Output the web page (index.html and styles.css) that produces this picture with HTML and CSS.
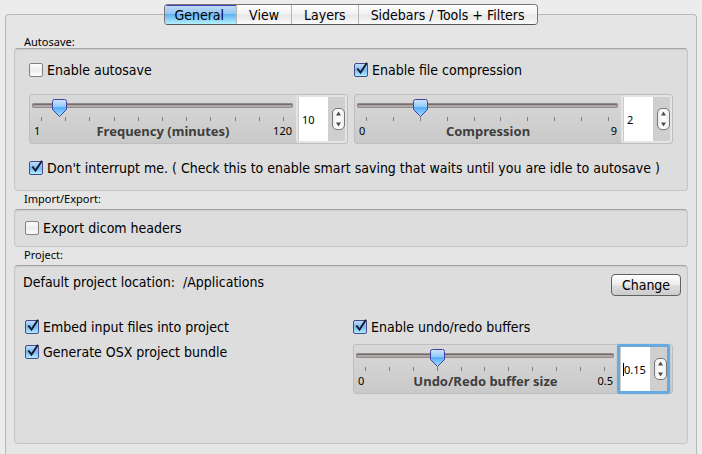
FILE: index.html
```html
<!DOCTYPE html>
<html lang="en">
<head>
<meta charset="utf-8">
<title>Preferences</title>
<link rel="stylesheet" href="styles.css">
</head>
<body>
<main class="window">
  <nav class="tabs">
    <button class="tab active" type="button">General</button>
    <button class="tab" type="button">View</button>
    <button class="tab" type="button">Layers</button>
    <button class="tab" type="button">Sidebars / Tools + Filters</button>
  </nav>
  <div class="panel">
    <section>
      <h2>Autosave:</h2>
      <div class="group autosave">
        <label class="check"><input type="checkbox">Enable autosave</label>
        <label class="check"><input type="checkbox" checked>Enable file compression</label>
        <div class="adjuster">
          <div class="scale">
            <input class="range" id="freq" type="range" min="1" max="120" value="10">
            <div class="ticks"><i></i><i></i><i></i><i></i><i></i><i></i><i></i><i></i><i></i><i></i><i></i></div>
            <div class="legend"><span>1</span><label for="freq">Frequency (minutes)</label><span>120</span></div>
          </div>
          <div class="spin">
            <input type="text" value="10" aria-label="Frequency value">
            <button type="button" aria-label="Step frequency"><svg viewBox="0 0 13 22"><path d="M4 7.500L6.500 3.500L9 7.500ZM4 14.500L6.500 18.500L9 14.500Z"/></svg></button>
          </div>
        </div>
        <div class="adjuster">
          <div class="scale">
            <input class="range" id="comp" type="range" min="0" max="9" value="2">
            <div class="ticks"><i></i><i></i><i></i><i></i><i></i><i></i><i></i><i></i><i></i><i></i></div>
            <div class="legend"><span>0</span><label for="comp">Compression</label><span>9</span></div>
          </div>
          <div class="spin">
            <input type="text" value="2" aria-label="Compression value">
            <button type="button" aria-label="Step compression"><svg viewBox="0 0 13 22"><path d="M4 7.500L6.500 3.500L9 7.500ZM4 14.500L6.500 18.500L9 14.500Z"/></svg></button>
          </div>
        </div>
        <label class="check wide"><input type="checkbox" checked>Don't interrupt me. ( Check this to enable smart saving that waits until you are idle to autosave )</label>
      </div>
    </section>
    <section>
      <h2>Import/Export:</h2>
      <div class="group export">
        <label class="check"><input type="checkbox">Export dicom headers</label>
      </div>
    </section>
    <section>
      <h2>Project:</h2>
      <div class="group project">
        <div class="location">
          <p>Default project location: &nbsp;/Applications</p>
          <button class="push" type="button">Change</button>
        </div>
        <div class="options">
          <div class="stack">
            <label class="check"><input type="checkbox" checked>Embed input files into project</label>
            <label class="check"><input type="checkbox" checked>Generate OSX project bundle</label>
          </div>
          <div class="stack">
            <label class="check"><input type="checkbox" checked>Enable undo/redo buffers</label>
            <div class="adjuster">
              <div class="scale">
                <input class="range" id="undo" type="range" min="0" max="0.5" step="0.01" value="0.15">
                <div class="ticks"><i></i><i></i><i></i><i></i><i></i><i></i><i></i><i></i><i></i><i></i><i></i></div>
                <div class="legend"><span>0</span><label for="undo">Undo/Redo buffer size</label><span>0.5</span></div>
              </div>
              <div class="spin focused">
                <input type="text" value="0.15" aria-label="Buffer size value">
                <button type="button" aria-label="Step buffer size"><svg viewBox="0 0 13 22"><path d="M4 7.500L6.500 3.500L9 7.500ZM4 14.500L6.500 18.500L9 14.500Z"/></svg></button>
              </div>
            </div>
          </div>
        </div>
      </div>
    </section>
  </div>
</main>
</body>
</html>
```
FILE: styles.css
```css
* { box-sizing: border-box; }
html { height: 100%; }
body {
  height: 100%;
  margin: 0;
  overflow: hidden;
  background: #ececec;
  color: #000;
  font: 14px/16px "DejaVu Sans Condensed", "DejaVu Sans", sans-serif;
}
button, input { font: inherit; color: inherit; margin: 0; }
h2, p { margin: 0; font-weight: 400; }
.window {
  display: flex;
  flex-direction: column;
  min-height: 100%;
  padding: 4px 5px 0 5px;
}
.tabs {
  position: relative;
  display: flex;
  align-self: center;
  height: 21px;
  margin-bottom: -11px;
  border: 1px solid #777;
  border-bottom-color: #555;
  border-radius: 4px;
  overflow: hidden;
}
.tab {
  padding: 0 12px;
  border: 0;
  border-left: 1px solid #b4b4b4;
  background: linear-gradient(#fff, #f1f1f1 48%, #e6e6e6 52%, #fafafa);
  line-height: 18px;
}
.tab.active {
  padding: 0 12px 0 9px;
  border-left: 0;
  background: linear-gradient(#c3dcf6, #95c7f3 46%, #62b2f1 50%, #b5f1fd);
  box-shadow: inset 0 1px #4640b0;
}
.panel {
  flex: 1;
  padding: 19px 8px 11px;
  border: 1px solid #b8b8b8;
  border-bottom: 0;
  border-radius: 4px 4px 0 0;
  background: #e5e5e5;
}
h2 {
  height: 18px;
  padding-left: 10px;
  font-size: 11px;
  font-family: "Noto Sans", sans-serif;
  line-height: 16px;
}
section:first-child h2 { height: 14px; }
.group {
  border: 1px solid #c6c6c6;
  border-top-color: #a4a4a4;
  border-radius: 4px;
  background: #ddd;
  box-shadow: inset 0 1px 1px #ccc;
}
.autosave {
  display: grid;
  grid-template-columns: 1fr 1fr;
  gap: 16px 6px;
  padding: 13px 14px 14px;
}
.check { display: flex; align-items: center; gap: 2px; height: 16px; white-space: nowrap; }
.wide { grid-column: 1 / 3; }
.check input {
  flex: none;
  appearance: none;
  width: 16px;
  height: 16px;
  background: url("data:image/svg+xml,%3Csvg xmlns='http://www.w3.org/2000/svg' viewBox='0 0 16 16'%3E%3Cdefs%3E%3ClinearGradient id='g' x2='0' y2='1'%3E%3Cstop stop-color='%23fff'/%3E%3Cstop offset='.5' stop-color='%23ececec'/%3E%3Cstop offset='1' stop-color='%23fff'/%3E%3C/linearGradient%3E%3C/defs%3E%3Crect x='.5' y='1.500' width='13' height='13' rx='1.500' fill='url(%23g)' stroke='%23828282'/%3E%3C/svg%3E");
}
.check input:checked {
  background: url("data:image/svg+xml,%3Csvg xmlns='http://www.w3.org/2000/svg' viewBox='0 0 16 16'%3E%3Cdefs%3E%3ClinearGradient id='g' x2='0' y2='1'%3E%3Cstop stop-color='%23c7e0fa'/%3E%3Cstop offset='.5' stop-color='%2376b9f5'/%3E%3Cstop offset='1' stop-color='%23b6f2ff'/%3E%3C/linearGradient%3E%3C/defs%3E%3Crect x='.5' y='1.500' width='13' height='13' rx='1.500' fill='url(%23g)' stroke='%23434b8c'/%3E%3Cpath d='M3.300 6.500L6.500 10.500L13 .8' fill='none' stroke='%23151c2c' stroke-width='2'/%3E%3C/svg%3E");
}
.adjuster {
  display: flex;
  height: 50px;
  border: 1px solid #bebebe;
  border-radius: 3px;
  background: linear-gradient(#d9d9d9, #c9c9c9);
}
.scale { flex: 1; min-width: 0; padding: 4px 3px 0 2px; }
.range {
  display: block;
  appearance: none;
  width: 100%;
  height: 13px;
  margin-bottom: 5px;
  background: none;
}
.range::-webkit-slider-runnable-track {
  height: 5px;
  border-radius: 3px;
  background: #aeaaaa;
  box-shadow: inset 0 0 0 1px #958b8b, inset 0 2px #776b6b;
}
.range::-webkit-slider-thumb {
  appearance: none;
  width: 19px;
  height: 18px;
  margin-top: -4px;
  background: url("data:image/svg+xml,%3Csvg xmlns='http://www.w3.org/2000/svg' viewBox='0 0 19 18'%3E%3Cdefs%3E%3ClinearGradient id='g' x2='0' y2='1'%3E%3Cstop stop-color='%23d0e6fb'/%3E%3Cstop offset='.42' stop-color='%2391cbfa'/%3E%3Cstop offset='.48' stop-color='%2355acf6'/%3E%3Cstop offset='1' stop-color='%23a0e5ff'/%3E%3C/linearGradient%3E%3C/defs%3E%3Cpath d='M4.500 .5H14.500Q16.500 .5 16.500 2.500V10.500L9.500 17.500L2.500 10.500V2.500Q2.500 .5 4.500 .5Z' fill='url(%23g)' stroke='%23433fa5'/%3E%3C/svg%3E");
}
.ticks { display: flex; justify-content: space-between; height: 4px; padding: 0 9px; }
.ticks i { width: 1px; background: #828282; }
.legend {
  display: grid;
  grid-template-columns: 40px 1fr 40px;
  align-items: center;
  padding: 2px 1px 0 2px;
  font-size: 11px;
  font-family: "Noto Sans", sans-serif;
}
.legend label { color: #3e3e3e; font-size: 13px; font-weight: 700; text-align: center; white-space: nowrap; }
.legend span:last-child { text-align: right; }
.spin {
  display: flex;
  align-items: center;
  justify-content: space-between;
  width: 51px;
  border: 2px solid #e4e4e4;
  border-radius: 3px;
  background: #cfcfcf;
}
.spin input {
  width: 30px;
  height: 44px;
  padding: 0 0 0 3px;
  border: 0;
  border-left: 1px solid #ccc;
  background: #fff;
  font-size: 11px;
  font-family: "Noto Sans", sans-serif;
  outline: 0;
}
.spin button {
  width: 13px;
  height: 22px;
  padding: 0;
  border: 1px solid #777;
  border-radius: 5px;
  background: linear-gradient(90deg, #eee, #fff, #eee);
}
.spin svg { display: block; width: 13px; height: 22px; margin: -1px; fill: #4c4c4c; }
.focused {
  position: relative;
  width: 53px;
  margin: -1px 2px -1px 0;
  border: 3px solid #68a9e0;
  box-shadow: 0 0 1px #68a9e0;
}
.focused::before {
  content: "";
  position: absolute;
  left: 3px;
  top: 16px;
  width: 1px;
  height: 13px;
  background: #000;
}
.export { padding: 10px 10px 10px; }
.project { padding: 8px 6px 49px 8px; }
.location { display: flex; justify-content: space-between; align-items: flex-start; }
.push {
  width: 70px;
  height: 22px;
  padding: 0;
  border: 1px solid #616161;
  border-radius: 4px;
  background: linear-gradient(#fff, #ececec 48%, #dedede 52%, #ccc);
  line-height: 18px;
}
.options {
  display: grid;
  grid-template-columns: 328px 1fr;
  margin: 23px 8px 0 2px;
}
.stack { display: flex; flex-direction: column; gap: 9px; }
```
